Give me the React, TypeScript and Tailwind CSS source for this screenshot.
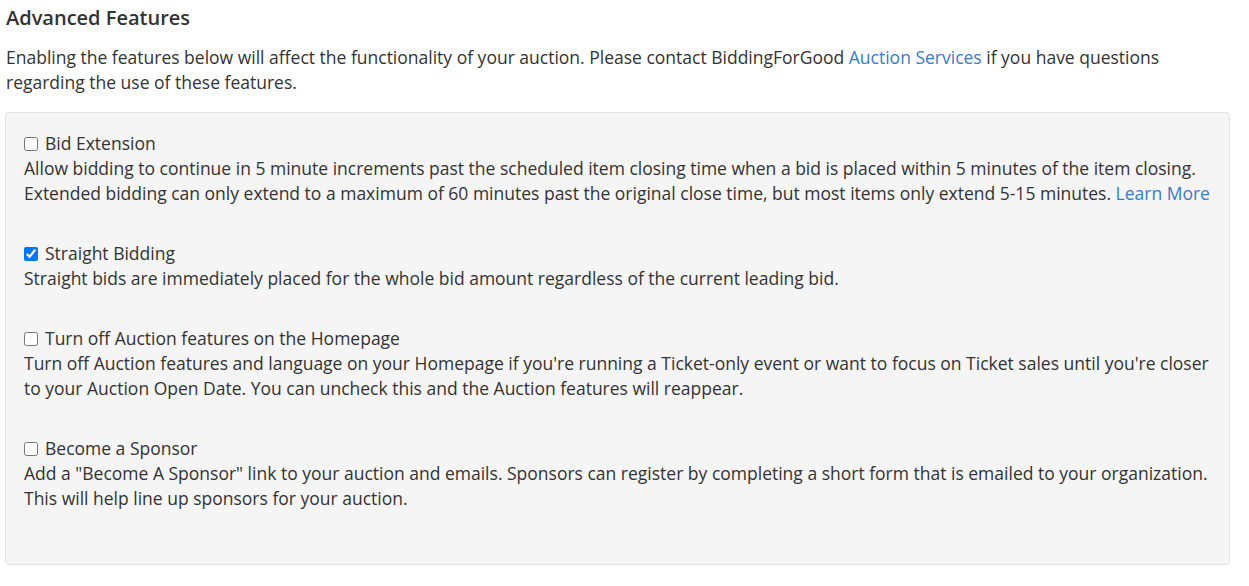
import { useState } from "react";

type Feature = {
  id: string;
  title: string;
  text: string;
  checked: boolean;
  link?: string;
};

const features: Feature[] = [
  {
    id: "bid-extension",
    title: "Bid Extension",
    text: "Allow bidding to continue in 5 minute increments past the scheduled item closing time when a bid is placed within 5 minutes of the item closing. Extended bidding can only extend to a maximum of 60 minutes past the original close time, but most items only extend 5-15 minutes.",
    checked: false,
    link: "Learn More",
  },
  {
    id: "straight-bidding",
    title: "Straight Bidding",
    text: "Straight bids are immediately placed for the whole bid amount regardless of the current leading bid.",
    checked: true,
  },
  {
    id: "auction-homepage",
    title: "Turn off Auction features on the Homepage",
    text: "Turn off Auction features and language on your Homepage if you're running a Ticket-only event or want to focus on Ticket sales until you're closer to your Auction Open Date. You can uncheck this and the Auction features will reappear.",
    checked: false,
  },
  {
    id: "sponsor",
    title: "Become a Sponsor",
    text: 'Add a "Become A Sponsor" link to your auction and emails. Sponsors can register by completing a short form that is emailed to your organization. This will help line up sponsors for your auction.',
    checked: false,
  },
];

function FeatureRow({ feature }: { feature: Feature }) {
  const [on, setOn] = useState(feature.checked);
  return (
    <div className="mb-[35px]">
      <label htmlFor={feature.id} className="flex items-center gap-[7px]">
        <input
          id={feature.id}
          type="checkbox"
          checked={on}
          onChange={() => setOn(!on)}
          className="m-0 w-[14px] h-[14px]"
        />
        <span>{feature.title}</span>
      </label>
      <p>
        {feature.text}
        {feature.link && (
          <>
            {" "}
            <a href="#" className="text-[#3a7bc8]">
              {feature.link}
            </a>
          </>
        )}
      </p>
    </div>
  );
}

export default function App() {
  return (
    <div className="bg-white min-h-screen px-[5px] pt-[4px] text-[#333] text-[17.5px] leading-[25px] font-['Open_Sans',sans-serif]">
      <h2 className="text-[20px] leading-[28px] ml-[1px] mb-[13px] font-semibold">Advanced Features</h2>
      <p className="ml-[1px] mb-[17px] pr-[60px]">
        Enabling the features below will affect the functionality of your auction. Please contact BiddingForGood{" "}
        <a href="#" className="text-[#3a7bc8]">
          Auction Services
        </a>{" "}
        if you have questions regarding the use of these features.
      </p>
      <div className="w-[1225px] bg-[#f5f5f5] border border-[#e3e3e3] rounded-[4px] px-[18px] pt-[18px] pb-[18px]">
        {features.map((f) => (
          <FeatureRow key={f.id} feature={f} />
        ))}
      </div>
    </div>
  );
}
